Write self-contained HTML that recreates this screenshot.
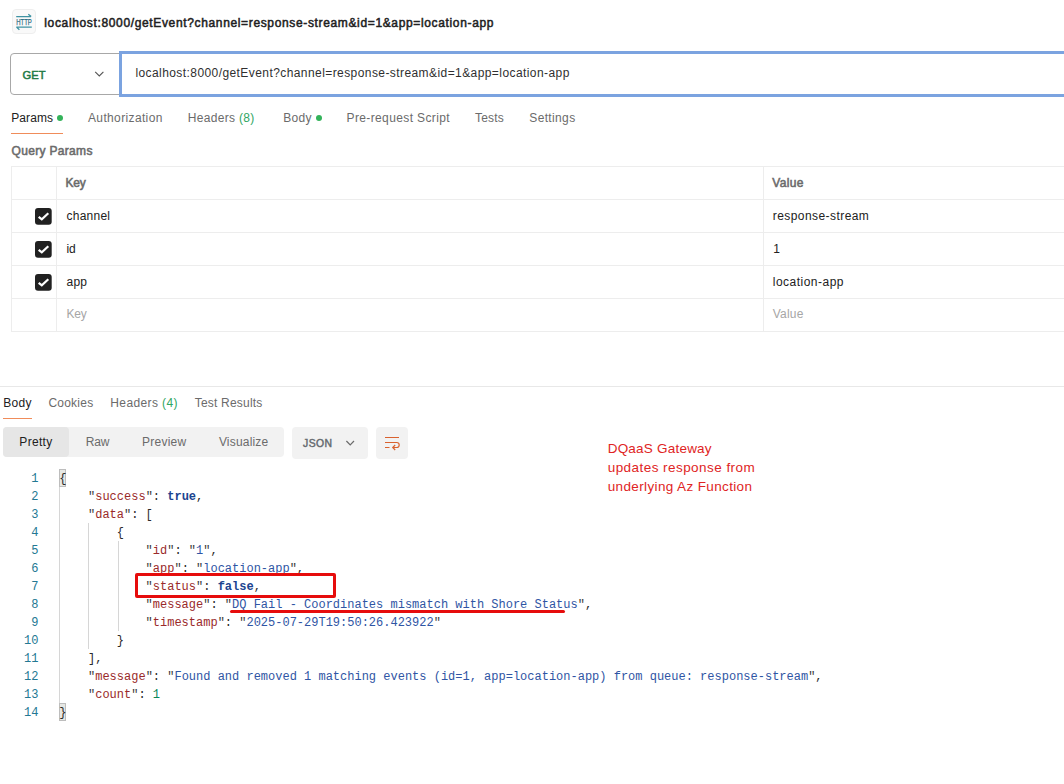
<!DOCTYPE html>
<html><head><meta charset="utf-8">
<style>
*{box-sizing:border-box;margin:0;padding:0}
html,body{width:1064px;height:784px;background:#fff;overflow:hidden}
body{position:relative;font-family:"Liberation Sans",sans-serif;font-size:12px;color:#212121}
.abs{position:absolute;white-space:nowrap}
.tx{font-family:"Liberation Sans",sans-serif}
.hl{height:1px;background:#ededed}
.vl{width:1px;background:#ededed}
.dot{width:6.400px;height:6.400px;border-radius:50%;background:#33b35a}
#codewrap{left:0;top:469.500px;width:1064px;font-family:"Liberation Mono",monospace;font-size:12px;line-height:18px;color:#2b2b2b}
.cl{position:relative;height:18px}
.ln{position:absolute;left:0;width:38.500px;text-align:right;color:#237893;white-space:pre}
.ct{position:absolute;left:59.200px;white-space:pre}
.ct i{font-style:normal;color:#3c3c3c}
.k{color:#9a2a2a}.b{color:#1b4490;font-weight:bold}.n{color:#098658}.v{color:#2f55a4}
.g{width:1px;background:#d6d6d6}
</style></head><body>

<div class="abs" style="left:11.800px;top:9.300px;width:24.600px;height:25px;border:1px solid #eeeeee;border-radius:4px;background:#f9f9f9"></div>
<svg class="abs" style="left:12px;top:9px" width="25" height="26" viewBox="0 0 25 26">
 <path d="M4.200 7.600H19M16.300 5.200L19.200 7.600" fill="none" stroke="#3f93a3" stroke-width="1.300"/>
 <path d="M19.800 18.050H4.300M4.500 18.050l2.900 2.700" fill="none" stroke="#3f93a3" stroke-width="1.300"/>
 <text x="4.200" y="16" font-family="Liberation Sans,sans-serif" font-size="9.400" fill="#2d6e84" stroke="#2d6e84" stroke-width="0.250" textLength="15.600" lengthAdjust="spacingAndGlyphs">HTTP</text>
</svg>

<div class="abs" style="left:10px;top:53px;width:112px;height:42px;border:1px solid #a8a8a8;border-radius:4px 0 0 4px;background:#fff"></div>
<svg class="abs" style="left:94px;top:70px" width="11" height="8" viewBox="0 0 11 8"><path d="M1.200 1.800l4.100 4.200 4.100-4.200" fill="none" stroke="#555" stroke-width="1.100"/></svg>
<div class="abs" style="left:119px;top:51px;width:960px;height:46px;border:3px solid #7ba3e0;background:#fff"></div>

<div class="abs dot" style="left:56.800px;top:114.800px"></div>
<div class="abs dot" style="left:315.600px;top:114.800px"></div>
<div class="abs" style="left:11.300px;top:133px;width:51.500px;height:1px;background:#f08c5a"></div>

<!-- table -->
<div class="abs hl" style="left:11px;top:166px;width:1053px"></div>
<div class="abs hl" style="left:11px;top:199px;width:1053px"></div>
<div class="abs hl" style="left:11px;top:232px;width:1053px"></div>
<div class="abs hl" style="left:11px;top:265px;width:1053px"></div>
<div class="abs hl" style="left:11px;top:298px;width:1053px"></div>
<div class="abs hl" style="left:11px;top:331px;width:1053px"></div>
<div class="abs vl" style="left:11px;top:166px;height:166px"></div>
<div class="abs vl" style="left:56px;top:166px;height:166px"></div>
<div class="abs vl" style="left:763px;top:166px;height:166px"></div>
<svg class="abs" style="left:34.600px;top:207.6px" width="17" height="17" viewBox="0 0 17 17"><rect x="0" y="0" width="16.700" height="16.800" rx="3" fill="#212121"/><path d="M3.700 8.800L6.800 11.400L13.300 5.300" fill="none" stroke="#fff" stroke-width="2.200"/></svg>
<svg class="abs" style="left:34.600px;top:240.6px" width="17" height="17" viewBox="0 0 17 17"><rect x="0" y="0" width="16.700" height="16.800" rx="3" fill="#212121"/><path d="M3.700 8.800L6.800 11.400L13.300 5.300" fill="none" stroke="#fff" stroke-width="2.200"/></svg>
<svg class="abs" style="left:34.600px;top:273.6px" width="17" height="17" viewBox="0 0 17 17"><rect x="0" y="0" width="16.700" height="16.800" rx="3" fill="#212121"/><path d="M3.700 8.800L6.800 11.400L13.300 5.300" fill="none" stroke="#fff" stroke-width="2.200"/></svg>

<!-- response -->
<div class="abs hl" style="left:0;top:386px;width:1064px;background:#e8e8e8"></div>
<div class="abs" style="left:3.300px;top:418px;width:28.500px;height:1px;background:#f08c5a"></div>
<div class="abs" style="left:3.300px;top:427px;width:280.500px;height:30px;background:#f2f2f2;border-radius:4px"></div>
<div class="abs" style="left:3.300px;top:427px;width:65.700px;height:30px;background:#e6e6e6;border-radius:4px"></div>
<div class="abs" style="left:292px;top:427px;width:76px;height:31.500px;background:#f2f2f2;border-radius:4px"></div>
<svg class="abs" style="left:345px;top:439px" width="11" height="8" viewBox="0 0 11 8"><path d="M1.400 2l3.800 3.900 3.800-3.900" fill="none" stroke="#6b6b6b" stroke-width="1.200"/></svg>
<div class="abs" style="left:376px;top:427px;width:32px;height:31.500px;background:#f2f2f2;border-radius:4px"></div>
<svg class="abs" style="left:384px;top:435px" width="17" height="16" viewBox="0 0 17 16"><path d="M1 2.500h14M1 7.500h11.700a2.500 2.500 0 0 1 0 5h-3.800M1 12.500h4.500M11.200 10l-2.500 2.500 2.500 2.500" fill="none" stroke="#d9622f" stroke-width="1.150"/></svg>

<!-- indent guides -->
<div class="abs g" style="left:59px;top:469px;height:252px"></div>
<div class="abs g" style="left:88px;top:523px;height:126px"></div>
<div class="abs g" style="left:118px;top:541px;height:90px"></div>
<div class="abs" style="left:59px;top:469px;width:7px;height:18px;background:#e6e8e4;border:1px solid #bdbdbd"></div>
<div class="abs" style="left:59px;top:703px;width:7px;height:18px;background:#e6e8e4;border:1px solid #bdbdbd"></div>

<div id="codewrap" class="abs">
<div class="cl"><span class="ln">1</span><span class="ct">{</span></div>
<div class="cl"><span class="ln">2</span><span class="ct">    <span class="k"><i>"</i>success<i>"</i></span>: <span class="b">true</span>,</span></div>
<div class="cl"><span class="ln">3</span><span class="ct">    <span class="k"><i>"</i>data<i>"</i></span>: [</span></div>
<div class="cl"><span class="ln">4</span><span class="ct">        {</span></div>
<div class="cl"><span class="ln">5</span><span class="ct">            <span class="k"><i>"</i>id<i>"</i></span>: <span class="v"><i>"</i>1<i>"</i></span>,</span></div>
<div class="cl"><span class="ln">6</span><span class="ct">            <span class="k"><i>"</i>app<i>"</i></span>: <span class="v"><i>"</i>location-app<i>"</i></span>,</span></div>
<div class="cl"><span class="ln">7</span><span class="ct">            <span class="k"><i>"</i>status<i>"</i></span>: <span class="b">false</span>,</span></div>
<div class="cl"><span class="ln">8</span><span class="ct">            <span class="k"><i>"</i>message<i>"</i></span>: <span class="v"><i>"</i>DQ Fail - Coordinates mismatch with Shore Status<i>"</i></span>,</span></div>
<div class="cl"><span class="ln">9</span><span class="ct">            <span class="k"><i>"</i>timestamp<i>"</i></span>: <span class="v"><i>"</i>2025-07-29T19:50:26.423922<i>"</i></span></span></div>
<div class="cl"><span class="ln">10</span><span class="ct">        }</span></div>
<div class="cl"><span class="ln">11</span><span class="ct">    ],</span></div>
<div class="cl"><span class="ln">12</span><span class="ct">    <span class="k"><i>"</i>message<i>"</i></span>: <span class="v"><i>"</i>Found and removed 1 matching events (id=1, app=location-app) from queue: response-stream<i>"</i></span>,</span></div>
<div class="cl"><span class="ln">13</span><span class="ct">    <span class="k"><i>"</i>count<i>"</i></span>: <span class="n">1</span></span></div>
<div class="cl"><span class="ln">14</span><span class="ct">}</span></div>
</div>

<div class="abs tx" id="t0" style="left:44.3px;top:16.64px;font-size:12px;line-height:13.788px;letter-spacing:0.645px;-webkit-text-stroke:0.5px #212121;color:#212121">localhost:8000/getEvent?channel=response-stream&amp;id=1&amp;app=location-app</div>
<div class="abs tx" id="t1" style="left:22.6px;top:69.26px;font-size:11.2px;line-height:12.869px;letter-spacing:0.033px;-webkit-text-stroke:0.5px #1f7a45;color:#1f7a45">GET</div>
<div class="abs tx" id="t2" style="left:135.4px;top:66.74px;font-size:12px;line-height:13.788px;letter-spacing:0.421px;color:#2f2f2f">localhost:8000/getEvent?channel=response-stream&amp;id=1&amp;app=location-app</div>
<div class="abs tx" id="t3" style="left:11.3px;top:111.64px;font-size:12px;line-height:13.788px;letter-spacing:0.059px;color:#212121">Params</div>
<div class="abs tx" id="t4" style="left:88px;top:111.64px;font-size:12px;line-height:13.788px;letter-spacing:0.358px;color:#6b6b6b">Authorization</div>
<div class="abs tx" id="t5" style="left:187.8px;top:111.64px;font-size:12px;line-height:13.788px;letter-spacing:0.311px;color:#6b6b6b">Headers <span style="color:#2fa663">(8)</span></div>
<div class="abs tx" id="t6" style="left:283.2px;top:111.64px;font-size:12px;line-height:13.788px;letter-spacing:0.36px;color:#6b6b6b">Body</div>
<div class="abs tx" id="t7" style="left:346.5px;top:111.64px;font-size:12px;line-height:13.788px;letter-spacing:0.378px;color:#6b6b6b">Pre-request Script</div>
<div class="abs tx" id="t8" style="left:475px;top:111.64px;font-size:12px;line-height:13.788px;letter-spacing:0.197px;color:#6b6b6b">Tests</div>
<div class="abs tx" id="t9" style="left:529.3px;top:111.64px;font-size:12px;line-height:13.788px;letter-spacing:0.355px;color:#6b6b6b">Settings</div>
<div class="abs tx" id="t10" style="left:11.6px;top:144.54px;font-size:12px;line-height:13.788px;letter-spacing:0.312px;-webkit-text-stroke:0.55px #6b6b6b;color:#6b6b6b">Query Params</div>
<div class="abs tx" id="t11" style="left:65.4px;top:177.24px;font-size:12px;line-height:13.788px;letter-spacing:-0.129px;-webkit-text-stroke:0.55px #6b6b6b;color:#6b6b6b">Key</div>
<div class="abs tx" id="t12" style="left:772.3px;top:177.24px;font-size:12px;line-height:13.788px;letter-spacing:0.338px;-webkit-text-stroke:0.55px #6b6b6b;color:#6b6b6b">Value</div>
<div class="abs tx" id="t13" style="left:66.5px;top:209.64px;font-size:12px;line-height:13.788px;letter-spacing:0.236px;color:#212121">channel</div>
<div class="abs tx" id="t14" style="left:772.8px;top:209.64px;font-size:12px;line-height:13.788px;letter-spacing:0.43px;color:#212121">response-stream</div>
<div class="abs tx" id="t15" style="left:66.5px;top:242.64px;font-size:12px;line-height:13.788px;letter-spacing:-0.172px;color:#212121">id</div>
<div class="abs tx" id="t16" style="left:773.3px;top:242.64px;font-size:12px;line-height:13.788px;letter-spacing:0px;color:#212121">1</div>
<div class="abs tx" id="t17" style="left:66.5px;top:275.54px;font-size:12px;line-height:13.788px;letter-spacing:0.223px;color:#212121">app</div>
<div class="abs tx" id="t18" style="left:772.8px;top:275.54px;font-size:12px;line-height:13.788px;letter-spacing:0.484px;color:#212121">location-app</div>
<div class="abs tx" id="t19" style="left:66.5px;top:308.34px;font-size:12px;line-height:13.788px;letter-spacing:-0.229px;color:#a6a6a6">Key</div>
<div class="abs tx" id="t20" style="left:772.8px;top:308.34px;font-size:12px;line-height:13.788px;letter-spacing:0.178px;color:#a6a6a6">Value</div>
<div class="abs tx" id="t21" style="left:3.3px;top:397.34px;font-size:12px;line-height:13.788px;letter-spacing:0.285px;color:#212121">Body</div>
<div class="abs tx" id="t22" style="left:48.4px;top:397.34px;font-size:12px;line-height:13.788px;letter-spacing:0.234px;color:#6b6b6b">Cookies</div>
<div class="abs tx" id="t23" style="left:110.3px;top:397.34px;font-size:12px;line-height:13.788px;letter-spacing:0.384px;color:#6b6b6b">Headers <span style="color:#2fa663">(4)</span></div>
<div class="abs tx" id="t24" style="left:194.7px;top:397.34px;font-size:12px;line-height:13.788px;letter-spacing:0.212px;color:#6b6b6b">Test Results</div>
<div class="abs tx" id="t25" style="left:19.3px;top:435.94px;font-size:12px;line-height:13.788px;letter-spacing:0.326px;color:#212121">Pretty</div>
<div class="abs tx" id="t26" style="left:85.8px;top:435.94px;font-size:12px;line-height:13.788px;letter-spacing:-0.205px;color:#6b6b6b">Raw</div>
<div class="abs tx" id="t27" style="left:142.1px;top:435.94px;font-size:12px;line-height:13.788px;letter-spacing:0.216px;color:#6b6b6b">Preview</div>
<div class="abs tx" id="t28" style="left:218.9px;top:435.94px;font-size:12px;line-height:13.788px;letter-spacing:0.187px;color:#6b6b6b">Visualize</div>
<div class="abs tx" id="t29" style="left:303.1px;top:438.29px;font-size:10.4px;line-height:11.95px;letter-spacing:0.37px;-webkit-text-stroke:0.45px #666b70;color:#666b70">JSON</div>
<div class="abs tx" id="t30" style="left:607.7px;top:441.38px;font-size:13.5px;line-height:15.511px;letter-spacing:0.216px;color:#e02424">DQaaS Gateway</div>
<div class="abs tx" id="t31" style="left:607.7px;top:460.28px;font-size:13.5px;line-height:15.511px;letter-spacing:0.448px;color:#e02424">updates response from</div>
<div class="abs tx" id="t32" style="left:607.7px;top:479.08px;font-size:13.5px;line-height:15.511px;letter-spacing:0.368px;color:#e02424">underlying Az Function</div>

<div class="abs" style="left:135px;top:573px;width:201px;height:25px;border:3px solid #e60c0c;border-radius:2px"></div>
<div class="abs" style="left:229.500px;top:610px;width:335.500px;height:3px;background:#e60c0c;border-radius:1.500px"></div>
</body></html>
